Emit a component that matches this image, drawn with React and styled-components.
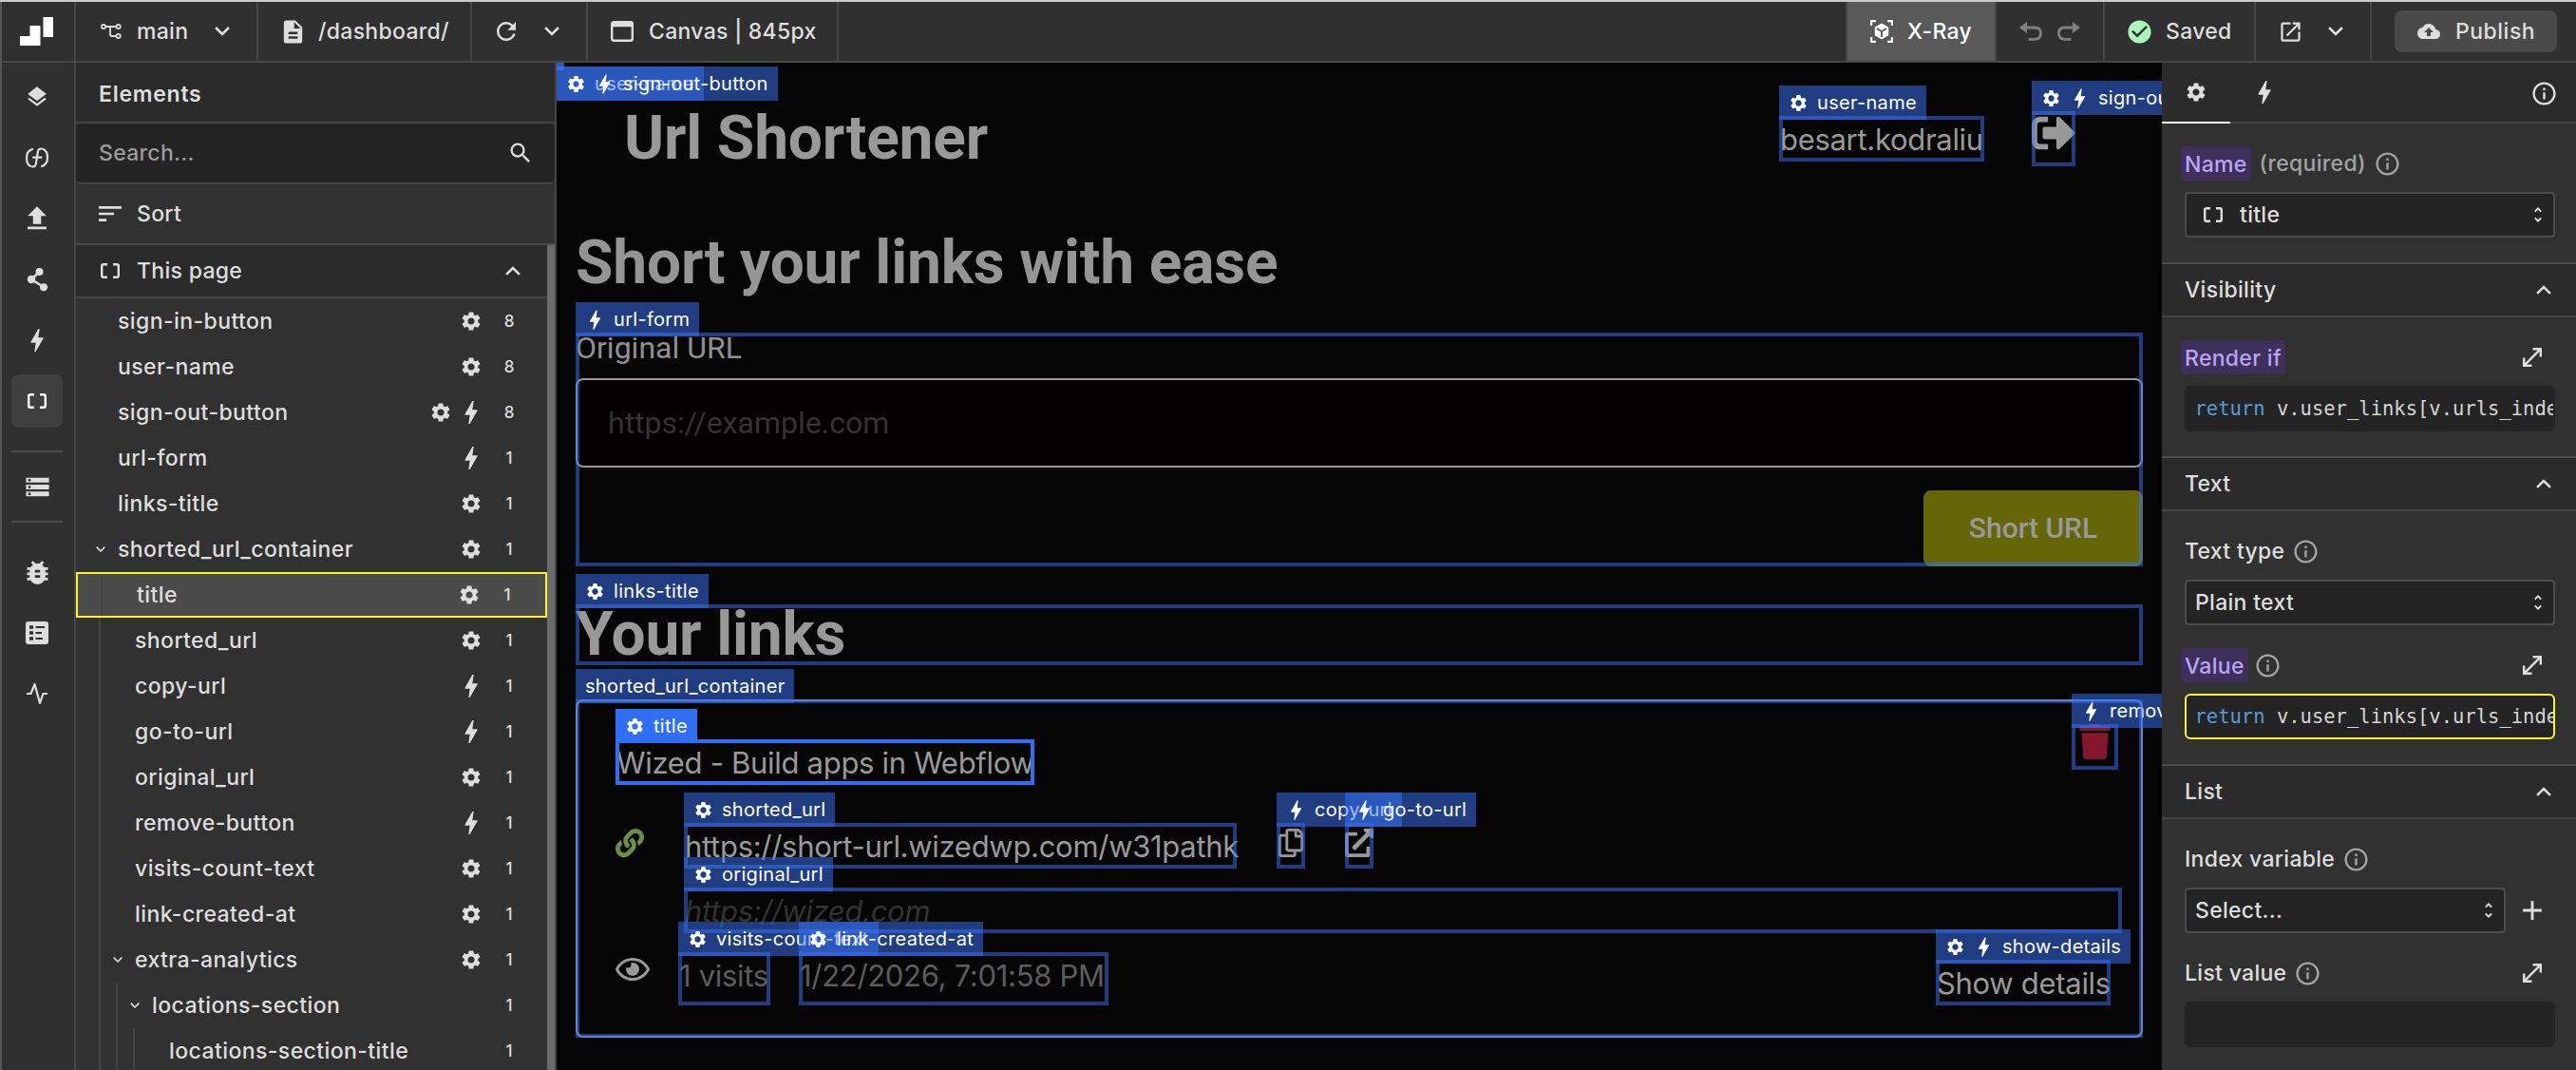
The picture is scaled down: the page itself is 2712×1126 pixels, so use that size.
import React from 'react';
import styled, { createGlobalStyle, css } from 'styled-components';
/* Icons */
import {
   MdAdd,
   MdBackup,
   MdBolt,
   MdBugReport,
   MdCheckCircle,
   MdDescription,
   MdInfoOutline,
   MdLayers,
   MdOpenInNew,
   MdRefresh,
   MdSearch,
   MdSettings,
   MdSort,
   MdStorage,
   MdUpload,
} from 'react-icons/md';
import {
   FaExternalLinkAlt,
   FaLink,
   FaRegCopy,
   FaRegEye,
   FaSignOutAlt,
   FaTrash,
} from 'react-icons/fa';

const GlobalStyle = createGlobalStyle`
   * {
      box-sizing: border-box;
   }
   body {
      margin: 0;
      background: #303030;
   }
   svg {
      display: block;
      flex-shrink: 0;
   }
`;

const line = '#464646';

/* Small drawings */
const Brackets = () => (
   <svg width="20" height="16" viewBox="0 0 20 16" fill="none" stroke="currentColor" strokeWidth="2.4">
      <path d="M7 1.2H3Q1.2 1.2 1.2 3V13Q1.2 14.8 3 14.8H7M13 1.2H17Q18.8 1.2 18.8 3V13Q18.8 14.8 17 14.8H13" />
   </svg>
);

const Chevron = ({ up, size = 16 }) => (
   <svg width={size} height={size * 0.62} viewBox="0 0 16 10" fill="none" stroke="currentColor" strokeWidth="2.6">
      <path d={up ? 'M1 9L8 2L15 9' : 'M1 1L8 8L15 1'} />
   </svg>
);

const UpDown = () => (
   <svg width="8" height="16" viewBox="0 0 8 16" fill="none" stroke="currentColor" strokeWidth="2">
      <path d="M.8 4.6L4 1.4L7.2 4.6M.8 11.4L4 14.6L7.2 11.4" />
   </svg>
);

const Expand = () => (
   <svg width="20" height="20" viewBox="0 0 20 20" fill="none" stroke="currentColor" strokeWidth="2.4">
      <path d="M10.5 1.2H18.8V9.5M18.8 1.2L1.2 18.8M1.2 10.5V18.8H9.5" />
   </svg>
);

const Logo = () => (
   <svg width="35" height="30" viewBox="0 0 35 30" fill="#fff">
      <path d="M24.5 0H35V21H24.5ZM10.5 9H21.5V30H0V20H10.5Z" />
   </svg>
);

const Branch = () => (
   <svg width="22" height="16" viewBox="0 0 22 16" fill="none" stroke="currentColor" strokeWidth="1.8">
      <circle cx="3" cy="3" r="2.1" />
      <circle cx="18.6" cy="3" r="2.1" />
      <circle cx="18.6" cy="13" r="2.1" />
      <path d="M5.2 3H16.4M10 3V11Q10 13 12 13H16.4" />
   </svg>
);

const BrowserWindow = () => (
   <svg width="24" height="22" viewBox="0 0 24 22" fill="none" stroke="currentColor" strokeWidth="2.4">
      <rect x="1.2" y="1.2" width="21.6" height="19.6" rx="2" />
      <path d="M1 4H23" strokeWidth="4.4" />
   </svg>
);

const CubeScan = () => (
   <svg width="24" height="24" viewBox="0 0 24 24">
      <path d="M1.1 6V1.1H6M18 1.1H22.9V6M22.9 18V22.9H18M6 22.9H1.1V18" fill="none" stroke="currentColor" strokeWidth="2.2" />
      <path d="M12 3.6L19.2 7.6V16.2L12 20.4L4.8 16.2V7.6Z" fill="currentColor" />
      <path d="M6.8 9L12 12L17.2 9M12 12V18" fill="none" stroke="#595959" strokeWidth="1.9" />
   </svg>
);

const Undo = ({ flip }) => (
   <svg width="24" height="20" viewBox="0 0 24 20" transform={flip ? 'scale(-1 1)' : undefined}>
      <path d="M0 6L8 0V12Z" fill="currentColor" />
      <path d="M7 6H16Q22.5 6 22.5 12Q22.5 18.3 16 18.3H9.5" fill="none" stroke="currentColor" strokeWidth="2.8" />
   </svg>
);

const FunctionIcon = () => (
   <svg width="26" height="22" viewBox="0 0 26 22" fill="none" stroke="currentColor" strokeWidth="2.2" strokeLinecap="round">
      <path d="M8 2Q2 4 2 11Q2 18 6 19.8M18 20Q24 18 24 11Q24 4 20 2.2" />
      <path d="M18 1.6Q14.4 1 13.8 5L12 16.5Q11.4 21 8 20.4M9 10.6H17.5" />
   </svg>
);

const Nodes = () => (
   <svg width="24" height="26" viewBox="0 0 24 26" fill="currentColor">
      <circle cx="14.5" cy="5" r="4" />
      <circle cx="6" cy="13" r="4.2" />
      <circle cx="19" cy="21.2" r="4" />
      <path d="M14.5 5L6 13L19 21" fill="none" stroke="currentColor" strokeWidth="2.6" />
   </svg>
);

const Checklist = () => (
   <svg width="24" height="24" viewBox="0 0 24 24">
      <rect width="24" height="24" rx="3" fill="currentColor" />
      <path d="M4 6H8M4 12H8M4 18H8" stroke="#303030" strokeWidth="3.4" />
      <path d="M10.5 6H20M10.5 12H17M10.5 18H18" stroke="#303030" strokeWidth="2.2" />
   </svg>
);

const Pulse = () => (
   <svg width="24" height="24" viewBox="0 0 24 24" fill="none" stroke="currentColor" strokeWidth="2.2" strokeLinejoin="round">
      <path d="M1 12H5.5L9.5 2L15 22L18.4 12H23" />
   </svg>
);

/* Shell */
const Shell = styled.div`
   display: flex;
   flex-direction: column;
   width: 2712px;
   height: 1126px;
   overflow: hidden;
   border-top: 2px solid #c9cacb;
   font: 500 23px/1.2 Inter, sans-serif;
   letter-spacing: 0.3px;
   white-space: nowrap;
   background: #303030;
   color: #dedede;
`;

const Columns = styled.div`
   display: flex;
   flex: 1;
   min-height: 0;
`;

/* Sits a touch lower than the icons beside it */
const Text = styled.span`
   padding-top: ${({ $drop }) => $drop || 2}px;
`;

/* Top bar */
const TopBar = styled.header`
   display: flex;
   height: 64px;
   border-bottom: 2px solid ${line};
   border-left: 2px solid #555;
   background: #303030;
`;

const Cell = styled.div`
   display: flex;
   align-items: center;
   width: ${({ $width }) => $width}px;
   padding: 0 28px 0 ${({ $pad }) => $pad || 0}px;
   gap: ${({ $gap }) => $gap || 0}px;
   border-right: ${({ $last }) => ($last ? 0 : 2)}px solid ${line};
   ${({ $active }) => $active && css`
      background: #595959;
      color: #fff;
   `}
   ${({ $muted }) => $muted && 'color: #808080;'}
`;

const Spacer = styled.div`
   flex: 1;
   border-right: 2px solid ${line};
`;

const Push = styled.span`
   margin-left: auto;
`;

const SavedMark = styled(MdCheckCircle)`
   color: #a8f7b9;
`;

const PublishButton = styled.button`
   display: flex;
   align-items: center;
   flex-shrink: 0;
   gap: 16px;
   width: 171px;
   height: 44px;
   padding: 0 0 0 24px;
   border: 0;
   border-radius: 8px;
   font: inherit;
   letter-spacing: 0.5px;
   background: #4a4a4a;
   color: #dedede;
`;

/* Icon rail */
const Rail = styled.nav`
   display: flex;
   flex-direction: column;
   width: 80px;
   padding: 8px 12px 0 10px;
   border-left: 2px solid #555;
   border-right: 2px solid ${line};
`;

const RailGroup = styled.div`
   display: flex;
   flex-direction: column;
   gap: 8px;
`;

const RailDivider = styled.hr`
   width: 54px;
   height: 2px;
   margin: ${({ $margin }) => $margin};
   border: 0;
   background: #4c4c4c;
`;

const RailItem = styled.div`
   display: flex;
   justify-content: center;
   align-items: center;
   height: 56px;
   border-radius: 8px;
   ${({ $active }) => $active && css`
      background: #404040;
      color: #fff;
   `}
`;

/* Elements panel */
const ElementsPanel = styled.aside`
   display: flex;
   flex-direction: column;
   width: 506px;
   border-right: 2px solid ${line};
   background: #313131;
`;

const PanelTitle = styled.h2`
   display: flex;
   align-items: center;
   height: 64px;
   margin: 0;
   padding-left: 24px;
   border-bottom: 2px solid ${line};
   font-size: 23px;
   font-weight: 600;
   letter-spacing: 0.75px;
   background: #2b2b2b;
`;

const SearchBox = styled.div`
   display: flex;
   justify-content: space-between;
   align-items: center;
   height: 64px;
   padding: 0 22px 0 24px;
   border-bottom: 2px solid ${line};
   border-radius: 6px;
   background: #242424;
   color: #9c9c9c;
   svg {
      color: #dedede;
   }
`;

const SortRow = styled.div`
   display: flex;
   align-items: center;
   gap: 12px;
   height: 64px;
   padding-left: 20px;
   border-bottom: 2px solid #4c4c4c;
`;

const TreeScroll = styled.div`
   flex: 1;
   min-height: 0;
   overflow: hidden;
   border-right: 8px solid #6b6b6b;
`;

const TreeHeader = styled.div`
   display: flex;
   align-items: center;
   gap: 18px;
   height: 56px;
   padding: 0 28px 0 26px;
   border-bottom: 2px solid ${line};
   background: #2b2b2b;
`;

const TreeRow = styled.div`
   display: flex;
   align-items: center;
   height: 48px;
   padding: 0 28px 0 24px;
   letter-spacing: 0.42px;
   ${({ $selected }) => $selected && css`
      border: 2px solid #fbf32d;
      background: #4b4b4b;
   `}
`;

const Guide = styled.span`
   align-self: stretch;
   width: 18px;
   border-left: 2px solid #444;
`;

const Twisty = styled.span`
   width: 20px;
   svg {
      margin-left: -3px;
   }
`;

const RowIcons = styled.span`
   display: flex;
   gap: 8px;
   margin-left: auto;
`;

const IconSlot = styled.span`
   display: flex;
   justify-content: center;
   align-items: center;
   width: 24px;
   height: 24px;
`;

const Count = styled.span`
   width: 24px;
   margin-left: 16px;
   font-size: 17px;
   letter-spacing: 0;
   text-align: center;
`;

/* Canvas */
const Canvas = styled.main`
   position: relative;
   width: 1690px;
   padding: 0 20px;
   overflow: hidden;
   background: #060606;
   color: #999;
   letter-spacing: 0;
`;

const tone = ({ $selected }) => ($selected ? '#2f6ff5' : 'rgba(56, 115, 249, 0.5)');

const Traced = styled.div`
   position: relative;
   flex-shrink: 0;
   width: ${({ $width }) => ($width ? `${$width}px` : 'auto')};
   &::after {
      content: '';
      position: absolute;
      z-index: 1;
      inset: 0;
      border: 4px solid ${tone};
      pointer-events: none;
   }
`;

/* Elements that are hidden on the page collapse into the canvas corner */
const Collapsed = styled(Traced)`
   position: absolute;
   top: 0;
   left: 0;
   width: 0;
   height: 0;
`;

const Tag = styled.span`
   position: absolute;
   z-index: 1;
   top: ${({ $top }) => $top ?? -32}px;
   left: 0;
   display: flex;
   align-items: center;
   gap: 10px;
   height: 36px;
   padding: 0 10px;
   font: 400 20px/36px Inter, sans-serif;
   letter-spacing: 0.3px;
   background: ${tone};
   color: #fff;
`;

const TagIcon = styled.span`
   display: flex;
   justify-content: center;
   width: 20px;
`;

const SiteHeader = styled.div`
   display: flex;
   align-items: center;
   height: 160px;
   padding: 0 71px 0 51px;
`;

const Heading = styled.h1`
   margin: ${({ $margin }) => $margin || 0};
   font: 700 64px/${({ $line }) => $line || 76}px Roboto, sans-serif;
   letter-spacing: -0.15px;
   color: ${({ $dim }) => ($dim ? '#959595' : '#999')};
`;

const PageText = styled.div`
   height: 48px;
   padding-left: 1px;
   font: 400 31px/50px Inter, sans-serif;
   letter-spacing: -0.3px;
   color: ${({ $color }) => $color || '#999'};
   font-style: ${({ $italic }) => ($italic ? 'italic' : 'normal')};
`;

const UserArea = styled.div`
   display: flex;
   align-items: center;
   gap: 50px;
   margin-left: auto;
`;

const SignOut = styled.div`
   height: 58px;
   svg {
      width: 46px;
      height: 46px;
   }
`;

const Label = styled.div`
   font: 400 32px/32px Roboto, sans-serif;
   color: #909090;
`;

const UrlInput = styled.div`
   height: 94px;
   margin-top: 16px;
   padding-left: 32px;
   border: 2px solid #999;
   border-radius: 8px;
   font: 400 32px/90px Roboto, sans-serif;
   background: #050000;
   color: #333;
`;

const SubmitButton = styled.div`
   width: 231px;
   height: 80px;
   margin: 24px 0 0 auto;
   border-radius: 8px;
   font: 500 30px/80px Roboto, sans-serif;
   text-align: center;
   background: #666609;
`;

const SectionGap = styled.div`
   height: ${({ $height }) => $height}px;
`;

const LinkCard = styled.div`
   height: 356px;
   padding: 24px 20px 0 40px;
   border: 2px solid #999;
   border-radius: 8px;
`;

const CardHead = styled.div`
   display: flex;
   justify-content: space-between;
   align-items: flex-start;
   height: 64px;
   padding-right: 4px;
`;

const CardTitle = styled.div`
   margin-top: 16px;
`;

const CardRow = styled.div`
   display: flex;
   gap: ${({ $gap }) => $gap}px;
   margin-top: ${({ $top }) => $top}px;
   padding-left: ${({ $indent }) => $indent || 0}px;
`;

const RowIcon = styled.div`
   display: flex;
   justify-content: center;
   align-items: flex-start;
   height: 48px;
   padding-top: ${({ $top }) => $top || 0}px;
   color: ${({ $color }) => $color || '#999'};
`;

const DetailsLink = styled.div`
   margin: 8px 12px 0 auto;
`;

/* Inspector */
const Inspector = styled.aside`
   width: 436px;
   background: #313131;
`;

const Tabs = styled.div`
   display: flex;
   align-items: center;
   height: 64px;
   padding-right: 19px;
   background: #2b2b2b;
   box-shadow: inset 0 -2px ${line};
`;

const Tab = styled.div`
   display: flex;
   justify-content: center;
   align-items: center;
   width: 72px;
   height: 64px;
   border-bottom: 2px solid ${({ $active }) => ($active ? '#fff' : 'transparent')};
`;

const SectionHeader = styled.div`
   display: flex;
   justify-content: space-between;
   align-items: center;
   height: 58px;
   padding: 0 26px 0 24px;
   border-top: 2px solid #4c4c4c;
   border-bottom: 2px solid ${line};
   background: #2b2b2b;
`;

const SectionBody = styled.div`
   display: flex;
   flex-direction: column;
   gap: 24px;
   padding: 24px 22px 26px 24px;
`;

const FieldLabel = styled.div`
   display: flex;
   align-items: center;
   gap: 8px;
   height: 36px;
   margin-bottom: 12px;
`;

const Badge = styled.span`
   height: 36px;
   margin: 0 -2px 0 -4px;
   padding: 0 4px;
   border-radius: 4px;
   line-height: 38px;
   background: #3e2f5b;
   color: #b9a5f6;
`;

const Hint = styled.span`
   color: #a3a3a3;
`;

const Required = styled(Text)`
   margin-left: 3px;
   color: #a3a3a3;
`;

const FieldAction = styled.span`
   margin: 0 14px 0 auto;
`;

const SelectBox = styled.div`
   display: flex;
   align-items: center;
   gap: 18px;
   flex: 1;
   height: 48px;
   padding: 0 12px 0 ${({ $pad }) => $pad || 9}px;
   border: 2px solid #4c4c4c;
   border-radius: 4px;
   background: #242424;
`;

const CodeBox = styled.div`
   height: 48px;
   padding-left: 8.5px;
   overflow: hidden;
   border: 2px solid ${({ $selected }) => ($selected ? '#fbf32d' : '#242424')};
   border-radius: 6px;
   font: 400 20.5px/44px "DejaVu Sans Mono", monospace;
   letter-spacing: 0;
   background: #242424;
   color: #d4d4d4;
   span {
      color: #569cd6;
   }
`;

const FieldRow = styled.div`
   display: flex;
   align-items: center;
`;

const AddButton = styled.span`
   margin: 0 7px 0 11px;
`;

const mainTools = [
   { id: 'layers', icon: <MdLayers size={26} /> },
   { id: 'functions', icon: <FunctionIcon /> },
   { id: 'upload', icon: <MdUpload size={34} /> },
   { id: 'nodes', icon: <Nodes /> },
   { id: 'events', icon: <MdBolt size={32} /> },
   { id: 'elements', icon: <Brackets />, active: true },
];

const dataTools = [{ id: 'data', icon: <MdStorage size={29} /> }];

const debugTools = [
   { id: 'debug', icon: <MdBugReport size={33} /> },
   { id: 'checklist', icon: <Checklist /> },
   { id: 'activity', icon: <Pulse /> },
];

const elements = [
   { name: 'sign-in-button', icons: 'g', count: 8 },
   { name: 'user-name', icons: 'g', count: 8 },
   { name: 'sign-out-button', icons: 'gb', count: 8 },
   { name: 'url-form', icons: 'b', count: 1 },
   { name: 'links-title', icons: 'g', count: 1 },
   { name: 'shorted_url_container', icons: 'g', count: 1, open: true },
   { name: 'title', icons: 'g', count: 1, depth: 1, selected: true },
   { name: 'shorted_url', icons: 'g', count: 1, depth: 1 },
   { name: 'copy-url', icons: 'b', count: 1, depth: 1 },
   { name: 'go-to-url', icons: 'b', count: 1, depth: 1 },
   { name: 'original_url', icons: 'g', count: 1, depth: 1 },
   { name: 'remove-button', icons: 'b', count: 1, depth: 1 },
   { name: 'visits-count-text', icons: 'g', count: 1, depth: 1 },
   { name: 'link-created-at', icons: 'g', count: 1, depth: 1 },
   { name: 'extra-analytics', icons: 'g', count: 1, depth: 1, open: true },
   { name: 'locations-section', icons: '', count: 1, depth: 2, open: true },
   { name: 'locations-section-title', icons: '', count: 1, depth: 3 },
];

const TracedTag = ({ icons = '', name, top, selected }) => (
   <Tag $top={top} $selected={selected}>
      {[...icons].map((icon) => (
         <TagIcon key={icon}>
            {icon === 'g' ? <MdSettings size={21} /> : <MdBolt size={27} />}
         </TagIcon>
      ))}
      {name}
   </Tag>
);

const Tools = ({ items }) => (
   <RailGroup>
      {items.map(({ id, icon, active }) => (
         <RailItem key={id} $active={active}>{icon}</RailItem>
      ))}
   </RailGroup>
);

const Field = ({ label, badge, required, info, action, children }) => (
   <div>
      <FieldLabel>
         {badge ? <Badge>{label}</Badge> : <Text>{label}</Text>}
         {required && <Required>(required)</Required>}
         {info && <Hint><MdInfoOutline size={29} /></Hint>}
         {action && <FieldAction><Expand /></FieldAction>}
      </FieldLabel>
      {children}
   </div>
);

const Section = ({ title, children }) => (
   <section>
      <SectionHeader>
         <Text>{title}</Text>
         <Chevron up />
      </SectionHeader>
      <SectionBody>{children}</SectionBody>
   </section>
);

const Code = ({ selected }) => (
   <CodeBox $selected={selected}>
      <span>return</span> v.user_links[v.urls_index].title
   </CodeBox>
);

const Toolbar = () => (
   <TopBar>
      <Cell $width={78} $pad={19}><Logo /></Cell>
      <Cell $width={192} $pad={26} $gap={16}>
         <Branch />
         <Text>main</Text>
         <Push><Chevron /></Push>
      </Cell>
      <Cell $width={225} $pad={22} $gap={12}>
         <MdDescription size={29} />
         <Text>/dashboard/</Text>
      </Cell>
      <Cell $width={122} $pad={21} $gap={25}>
         <MdRefresh size={30} />
         <Chevron />
      </Cell>
      <Cell $width={264} $pad={24} $gap={16}>
         <BrowserWindow />
         <Text>Canvas | 845px</Text>
      </Cell>
      <Spacer />
      <Cell $width={157} $pad={24} $gap={15} $active>
         <CubeScan />
         <Text>X-Ray</Text>
      </Cell>
      <Cell $width={114} $pad={24} $gap={16} $muted>
         <Undo />
         <Undo flip />
      </Cell>
      <Cell $width={159} $pad={22} $gap={13}>
         <SavedMark size={29} />
         <Text>Saved</Text>
      </Cell>
      <Cell $width={122} $pad={23} $gap={26}>
         <MdOpenInNew size={27} />
         <Chevron />
      </Cell>
      <Cell $width={215} $pad={24} $last>
         <PublishButton>
            <MdBackup size={24} />
            <Text>Publish</Text>
         </PublishButton>
      </Cell>
   </TopBar>
);

const ElementTree = () => (
   <ElementsPanel>
      <PanelTitle><Text $drop={5}>Elements</Text></PanelTitle>
      <SearchBox>
         <Text>Search...</Text>
         <MdSearch size={28} />
      </SearchBox>
      <SortRow>
         <MdSort size={32} />
         <Text>Sort</Text>
      </SortRow>
      <TreeScroll>
         <TreeHeader>
            <Brackets />
            <Text>This page</Text>
            <Push><Chevron up /></Push>
         </TreeHeader>
         {elements.map(({ name, icons, count, depth = 0, open, selected }) => (
            <TreeRow key={name} $selected={selected}>
               {Array.from({ length: depth }, (_, i) => <Guide key={i} />)}
               <Twisty>{open && <Chevron size={10} />}</Twisty>
               <Text>{name}</Text>
               <RowIcons>
                  {[...icons].map((icon) => (
                     <IconSlot key={icon}>
                        {icon === 'g' ? <MdSettings size={24} /> : <MdBolt size={32} />}
                     </IconSlot>
                  ))}
               </RowIcons>
               <Count>{count}</Count>
            </TreeRow>
         ))}
      </TreeScroll>
   </ElementsPanel>
);

const Page = () => (
   <Canvas>
      <Collapsed><TracedTag icons="g" name="user-name" top={4} /></Collapsed>
      <Collapsed><TracedTag icons="gb" name="sign-out-button" top={4} /></Collapsed>

      <SiteHeader>
         <Heading>Url Shortener</Heading>
         <UserArea>
            <Traced $width={216}>
               <PageText>besart.kodraliu</PageText>
               <TracedTag icons="g" name="user-name" />
            </Traced>
            <Traced $width={46}>
               <SignOut><FaSignOutAlt /></SignOut>
               <TracedTag icons="gb" name="sign-out-button" />
            </Traced>
         </UserArea>
      </SiteHeader>

      <Heading $margin="13px 0 35px" $dim>Short your links with ease</Heading>

      <Traced>
         <Label>Original URL</Label>
         <UrlInput>https://example.com</UrlInput>
         <SubmitButton>Short URL</SubmitButton>
         <TracedTag icons="b" name="url-form" />
      </Traced>

      <SectionGap $height={40} />
      <Traced>
         <Heading as="h2" $line={64}>Your links</Heading>
         <TracedTag icons="g" name="links-title" />
      </Traced>

      <SectionGap $height={36} />
      <Traced>
         <TracedTag name="shorted_url_container" />
         <LinkCard>
            <CardHead>
               <CardTitle>
                  <Traced $width={441} $selected>
                     <PageText>Wized - Build apps in Webflow</PageText>
                     <TracedTag icons="g" name="title" selected />
                  </Traced>
               </CardTitle>
               <Traced $width={49}>
                  <RowIcon $color="#84172e"><FaTrash size={37} /></RowIcon>
                  <TracedTag icons="b" name="remove-button" />
               </Traced>
            </CardHead>

            <CardRow $gap={42} $top={40}>
               <RowIcon $top={6} $color="#6d9043"><FaLink size={30} /></RowIcon>
               <Traced $width={582}>
                  <PageText>https://short-url.wizedwp.com/w31pathk</PageText>
                  <TracedTag icons="g" name="shorted_url" />
               </Traced>
               <Traced $width={30}>
                  <RowIcon $top={6}><FaRegCopy size={30} /></RowIcon>
                  <TracedTag icons="b" name="copy-url" />
               </Traced>
               <Traced $width={30}>
                  <RowIcon $top={6}><FaExternalLinkAlt size={30} /></RowIcon>
                  <TracedTag icons="b" name="go-to-url" />
               </Traced>
            </CardRow>

            <CardRow $top={20} $indent={72}>
               <Traced $width={1514}>
                  <PageText $color="#333" $italic>https://wized.com</PageText>
                  <TracedTag icons="g" name="original_url" />
               </Traced>
            </CardRow>

            <CardRow $gap={30} $top={20}>
               <RowIcon><FaRegEye size={36} /></RowIcon>
               <Traced $width={97}>
                  <PageText $color="#5c5c5c">1 visits</PageText>
                  <TracedTag icons="g" name="visits-count-text" />
               </Traced>
               <Traced $width={326}>
                  <PageText $color="#5c5c5c">1/22/2026, 7:01:58 PM</PageText>
                  <TracedTag icons="g" name="link-created-at" />
               </Traced>
               <DetailsLink>
                  <Traced $width={184}>
                     <PageText>Show details</PageText>
                     <TracedTag icons="gb" name="show-details" />
                  </Traced>
               </DetailsLink>
            </CardRow>
         </LinkCard>
      </Traced>
   </Canvas>
);

const ElementInspector = () => (
   <Inspector>
      <Tabs>
         <Tab $active><MdSettings size={24} /></Tab>
         <Tab><MdBolt size={32} /></Tab>
         <Push><MdInfoOutline size={29} /></Push>
      </Tabs>
      <SectionBody>
         <Field label="Name" badge required info>
            <SelectBox $pad={18}>
               <Brackets />
               <Text>title</Text>
               <Push><UpDown /></Push>
            </SelectBox>
         </Field>
      </SectionBody>
      <Section title="Visibility">
         <Field label="Render if" badge action><Code /></Field>
      </Section>
      <Section title="Text">
         <Field label="Text type" info>
            <SelectBox>
               <Text>Plain text</Text>
               <Push><UpDown /></Push>
            </SelectBox>
         </Field>
         <Field label="Value" badge info action><Code selected /></Field>
      </Section>
      <Section title="List">
         <Field label="Index variable" info>
            <FieldRow>
               <SelectBox>
                  <Text>Select...</Text>
                  <Push><UpDown /></Push>
               </SelectBox>
               <AddButton><MdAdd size={34} /></AddButton>
            </FieldRow>
         </Field>
         <Field label="List value" info action><CodeBox /></Field>
      </Section>
   </Inspector>
);

export default function App() {
   return (
      <Shell>
         <GlobalStyle />
         <Toolbar />
         <Columns>
            <Rail>
               <Tools items={mainTools} />
               <RailDivider $margin="24px 0 8px" />
               <Tools items={dataTools} />
               <RailDivider $margin="8px 0 24px" />
               <Tools items={debugTools} />
            </Rail>
            <ElementTree />
            <Page />
            <ElementInspector />
         </Columns>
      </Shell>
   );
}
